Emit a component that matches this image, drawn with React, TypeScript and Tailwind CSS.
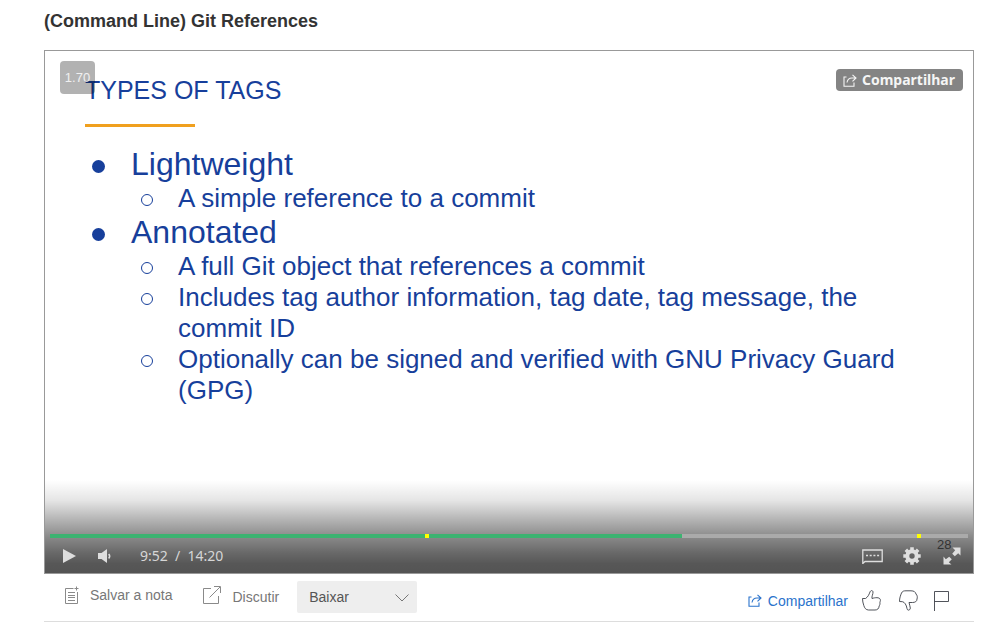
import type { ReactNode } from 'react';

function ShareIcon({ className }: { className?: string }) {
  return (
    <svg className={className} width="14" height="13" viewBox="0 0 14 13" fill="none" stroke="currentColor" strokeWidth="1.1" aria-hidden="true">
      <path d="M3.500 3H1v9.300h10V8.500" />
      <path d="M4 8.500C4.500 5.500 6.500 4 9 4h4M9.500 0.800 13 4 9.500 7.300" />
    </svg>
  );
}

function Heading({ children }: { children: ReactNode }) {
  return (
    <div className="flex items-center gap-[26px] text-[32px] leading-[37px]">
      <span className="mt-1 h-[13px] w-[13px] shrink-0 rounded-full bg-[#173f9b]" />
      <span>{children}</span>
    </div>
  );
}

function SubPoint({ children }: { children: ReactNode }) {
  return (
    <li className="flex gap-[25px] text-[26px] leading-[31px]">
      <span className="mt-[11px] h-3 w-3 shrink-0 rounded-full border border-[#173f9b]" />
      <span>{children}</span>
    </li>
  );
}

function Slide() {
  return (
    <div className="pt-6 pr-16 pl-10 text-[#173f9b]">
      <h2 className="text-[25px] leading-[31px]">TYPES OF TAGS</h2>
      <div className="mt-[18px] h-[3px] w-[110px] bg-[#f0a01e]" />
      <ul className="mt-[19px] pl-[7px]">
        <li>
          <Heading>Lightweight</Heading>
          <ul className="pl-[49px]">
            <SubPoint>A simple reference to a commit</SubPoint>
          </ul>
        </li>
        <li>
          <Heading>Annotated</Heading>
          <ul className="pl-[49px]">
            <SubPoint>A full Git object that references a commit</SubPoint>
            <SubPoint>Includes tag author information, tag date, tag message, the commit ID</SubPoint>
            <SubPoint>Optionally can be signed and verified with GNU Privacy Guard (GPG)</SubPoint>
          </ul>
        </li>
      </ul>
    </div>
  );
}

function Controls() {
  return (
    <div className="absolute inset-x-0 bottom-0 bg-[linear-gradient(to_bottom,#ffffff00_0%,#0000001a_22%,#00000045_40%,#00000073_60%,#00000096_78%,#000000a8_90%,#000000ab_100%)] pt-[54px] font-['Noto_Sans',sans-serif] text-[#dedede]">
      <div className="relative mx-[5px] h-1 bg-[#aaaaaa]" role="progressbar" aria-label="Progresso" aria-valuenow={69}>
        <div className="h-1 w-[68.8%] bg-[#3cb371]" />
        <span className="absolute top-0 left-[40.9%] h-1 w-1 bg-[#ffff00]" />
        <span className="absolute top-0 left-[94.4%] h-1 w-1 bg-[#ffff00]" />
      </div>
      <div className="flex h-[35px] items-center pt-px pr-3 pl-[18px]">
        <button type="button" aria-label="Reproduzir">
          <svg width="13" height="14" viewBox="0 0 13 14" fill="currentColor"><path d="M0 0 13 7 0 14z" /></svg>
        </button>
        <button type="button" aria-label="Volume" className="ml-[22px]">
          <svg width="14" height="14" viewBox="0 0 14 14" fill="currentColor">
            <path d="M0 4h3.500L9 0v14L3.500 10H0z" />
            <path d="M10.700 5q2 2.200 0 4.500" fill="none" stroke="currentColor" strokeWidth="1.500" />
          </svg>
        </button>
        <span className="ml-7 text-sm whitespace-pre text-[#d6d6d6]">9:52  /  14:20</span>
        <button type="button" aria-label="Legendas" className="ml-auto">
          <svg width="21" height="15" viewBox="0 0 21 15" fill="none" stroke="currentColor">
            <path d="M.8 1h19.400v11.500H3L.8 14.500z" strokeWidth="1.300" />
            <path d="M4 6.500h13.500" strokeWidth="1.500" strokeDasharray="2 1.700" />
          </svg>
        </button>
        <button type="button" aria-label="Ajustes" className="ml-5">
          <svg width="18" height="18" viewBox="0 0 18 18" fill="none" stroke="currentColor">
            <circle cx="9" cy="9" r="4.700" strokeWidth="4" />
            <path d="M9 .3v3M9 14.700v3M.3 9h3M14.700 9h3M2.850 2.850l2.100 2.100M13.050 13.050l2.100 2.100M2.850 15.150l2.100-2.100M13.050 4.950l2.100-2.100" strokeWidth="3.600" />
          </svg>
        </button>
        <button type="button" aria-label="Tela cheia" className="relative ml-[22px]">
          <span className="absolute -top-[10px] -left-[6px] font-['Liberation_Sans',Arial,sans-serif] text-[13px] leading-4 text-[#333333]">28</span>
          <svg width="18" height="18" viewBox="0 0 18 18" fill="currentColor">
            <path d="M9.500 0.500H17.500V8.500L15.200 6.200 11.800 9.300 9.200 6.700 12.200 3.200zM0.500 9.500V17.500H8.500L5.800 15.200 8.800 12.300 6.200 9.700 2.800 12.200z" />
          </svg>
        </button>
      </div>
    </div>
  );
}

export default function App() {
  return (
    <main className="bg-white pr-[19px] pl-11 font-['Liberation_Sans',Arial,sans-serif] text-[#777777]">
      <h1 className="pt-[9px] pb-[17px] text-lg leading-6 font-bold text-[#333333]">(Command Line) Git References</h1>

      <section className="border border-[#999999]" aria-label="Vídeo">
        <div className="relative aspect-video overflow-hidden">
          <Slide />
          <span className="absolute top-[10px] left-[15px] flex h-[33px] w-[35px] items-center justify-center rounded bg-black/30 text-[13px] text-white/80">1.70</span>
          <button type="button" className="absolute top-[18px] right-[10px] flex h-[22px] items-center gap-[5px] rounded bg-[#848484] pr-2 pl-[7px] font-['Noto_Sans',sans-serif] text-sm font-bold text-[#f5f5f5]">
            <ShareIcon />
            Compartilhar
          </button>
          <Controls />
        </div>
      </section>

      <div className="flex h-12 items-center border-b border-[#dddddd] pb-[2px] pl-5 text-sm">
        <button type="button" className="mb-1 flex items-center gap-[11px]">
          <svg width="15" height="18" viewBox="0 0 15 18" fill="none" stroke="#8a8a8a" aria-hidden="true">
            <path d="M9.500 2.500h-8v15h12V6M4 6.500h7M4 9.500h7M4 11.500h7M4 14.500h7M12.500.5v4M10.500 2.500h4" />
          </svg>
          Salvar a nota
        </button>
        <a href="#discutir" className="ml-[30px] flex items-center gap-3">
          <svg className="mb-[3px]" width="18" height="18" viewBox="0 0 18 18" fill="none" stroke="#8a8a8a" aria-hidden="true">
            <path d="M8 2.500H.5v15h15V10M6.500 11.500 17 1M11 .5h6.500V7" />
          </svg>
          Discutir
        </a>
        <div className="relative ml-[18px]">
          <select aria-label="Baixar" className="h-8 w-[120px] appearance-none rounded-xs bg-[#eeeeee] px-3 text-sm text-[#555555]">
            <option>Baixar</option>
          </select>
          <svg className="pointer-events-none absolute top-[13px] right-2" width="14" height="8" viewBox="0 0 14 8" fill="none" stroke="#777777" aria-hidden="true">
            <path d="M.5.5 7 7 13.500.5" />
          </svg>
        </div>

        <div className="mt-2 mr-6 ml-auto flex items-center text-[#3d4148]">
          <a href="#compartilhar" className="flex items-center gap-[6px] text-[#2a73cc]">
            <ShareIcon />
            Compartilhar
          </a>
          <button type="button" aria-label="Gostei" className="ml-[14px]">
            <svg width="19" height="21" viewBox="0 0 19 21" fill="none" stroke="currentColor" strokeWidth="0.900">
              <path d="M.5 8.500H3.500C6 7 7 4.500 8 2 8.800 0 10.800.2 11 2c.2 2-1.500 4.500-1 6.500C13 7.500 17.500 7 18.300 9.500c.4 1.500-.4 2-.4 3.200.3 1.800-.3 2.300-.7 3.300-.4 2.700-1.700 4-4.200 4H6.500C4 20 2.500 18 1.800 15.500 1 13 .5 11 .5 8.500z" />
            </svg>
          </button>
          <button type="button" aria-label="Não gostei" className="ml-[18px]">
            <svg width="19" height="21" viewBox="0 0 19 21" fill="none" stroke="currentColor" strokeWidth="0.900">
              <path d="M.5 11.500C.5 8 1.500 5.500 2.500 3 3.500 1 5 .8 7 .8h5c3 0 4.500 1.200 5 3.200 1.500 1.500 1.500 3.500 1 5 0 2.500-2 3.500-4.500 3.500H10c.2 2 1.300 3.500 1.300 5.500 0 2.500-3 3-3.300.5C7.500 15 5.500 12 3.500 11.700z" />
            </svg>
          </button>
          <button type="button" aria-label="Denunciar" className="ml-4">
            <svg width="16" height="21" viewBox="0 0 16 21" fill="none" stroke="currentColor" strokeWidth="0.900">
              <path d="M.5 21V1.500h14v10H.5" />
            </svg>
          </button>
        </div>
      </div>
    </main>
  );
}
